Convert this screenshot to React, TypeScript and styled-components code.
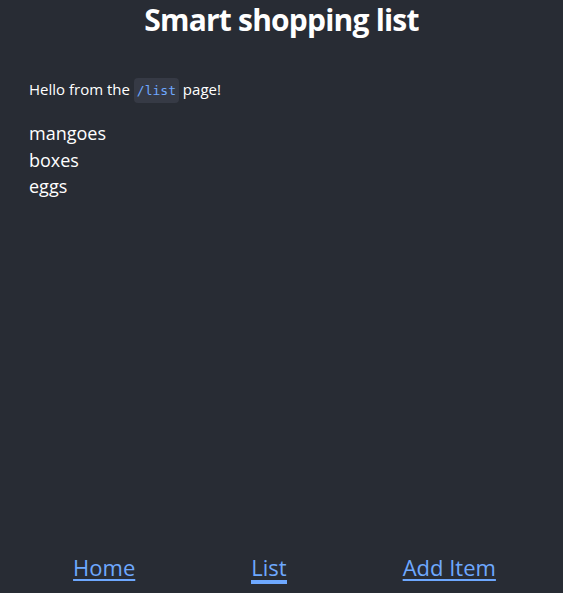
import React from "react";
import styled, { createGlobalStyle } from "styled-components";

const GlobalStyle = createGlobalStyle`
  html, body {
    margin: 0;
    padding: 0;
    background: #282c34;
  }
  body {
    font-family: "Open Sans", "Noto Sans", sans-serif;
    color: #ffffff;
  }
`;

const Page = styled.div`
  display: flex;
  flex-direction: column;
  min-height: 100vh;
  background: #282c34;
`;

const Header = styled.header`
  text-align: center;
  padding-top: 1px;
`;

const Title = styled.h1`
  margin: 0;
  font-size: 30px;
  font-weight: 700;
  letter-spacing: -0.8px;
  line-height: 38px;
  color: #ffffff;
`;

const Main = styled.main`
  flex: 1;
  padding: 37px 29px 0;
`;

const Intro = styled.p`
  margin: 0 0 16px;
  font-size: 15px;
  line-height: 26px;
`;

const Code = styled.code`
  font-family: "DejaVu Sans Mono", "Liberation Mono", monospace;
  font-size: 13px;
  color: #6ea8fe;
  background: #363a45;
  border-radius: 4px;
  padding: 5px 3px;
`;

const ItemList = styled.ul`
  list-style: none;
  margin: 0;
  padding: 0;
`;

const Item = styled.li`
  font-size: 18px;
  line-height: 26.5px;
`;

const Nav = styled.nav`
  display: flex;
  justify-content: center;
  align-items: flex-end;
  gap: 116px;
  padding: 0 0 9px 6px;
`;

const NavLink = styled.a<{ $active?: boolean }>`
  font-size: 22px;
  line-height: 26px;
  color: #6ea8fe;
  text-decoration: ${(p) => (p.$active ? "none" : "underline")};
  text-underline-offset: 3px;
  border-bottom: ${(p) => (p.$active ? "4px solid #6ea8fe" : "none")};
  padding-bottom: ${(p) => (p.$active ? "0" : "4px")};
  cursor: pointer;
`;

export default function App() {
  return (
    <>
      <GlobalStyle />
      <Page>
        <Header>
          <Title>Smart shopping list</Title>
        </Header>
        <Main>
          <Intro>
            Hello from the <Code>/list</Code> page!
          </Intro>
          <ItemList>
            <Item>mangoes</Item>
            <Item>boxes</Item>
            <Item>eggs</Item>
          </ItemList>
        </Main>
        <Nav>
          <NavLink href="#/">Home</NavLink>
          <NavLink href="#/list" $active>
            List
          </NavLink>
          <NavLink href="#/add-item">Add Item</NavLink>
        </Nav>
      </Page>
    </>
  );
}
